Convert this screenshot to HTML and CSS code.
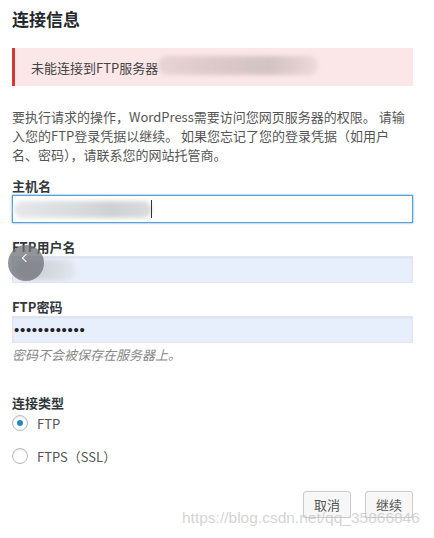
FILE: index.html
```html
<!DOCTYPE html>
<html>
<head>
    <meta charset="utf-8">
    <title>连接信息</title>
    <link rel="stylesheet" href="styles.css">
</head>
<body>
    <div class="container">
        <h2>连接信息</h2>

        <div class="notice">
            <p>未能连接到FTP服务器<span class="smudge smudge-notice"></span></p>
        </div>

        <p class="intro">要执行请求的操作，WordPress需要访问您网页服务器的权限。 请输入您的FTP登录凭据以继续。 如果您忘记了您的登录凭据（如用户名、密码），请联系您的网站托管商。</p>

        <div class="field">
            <label for="hostname">主机名</label>
            <div class="input focused">
                <span class="smudge smudge-host"></span><span class="caret"></span>
            </div>
        </div>

        <div class="field">
            <label for="username">FTP用户名</label>
            <div class="input autofill">
                <span class="smudge smudge-user"></span>
            </div>
        </div>

        <div class="field">
            <label for="password">FTP密码</label>
            <div class="input autofill"><span class="dots">••••••••••••</span></div>
            <p class="hint">密码不会被保存在服务器上。</p>
        </div>

        <div class="type">
            <h4>连接类型</h4>
            <div class="radio-row"><span class="radio checked"></span>FTP</div>
            <div class="radio-row second"><span class="radio"></span>FTPS（SSL）</div>
        </div>

        <div class="actions">
            <button class="button">取消</button>
            <button class="button">继续</button>
        </div>
    </div>

    <!-- 悬浮返回按钮和水印 -->
    <div class="back-btn"><span class="arrow"></span></div>
    <div class="watermark">https://blog.csdn.net/qq_35866846</div>
</body>
</html>
```

FILE: styles.css
```css
body {
    margin: 0;
    background-color: #fff;
    color: #444;
    font-family: "Noto Sans CJK SC", "Noto Sans", sans-serif;
    font-size: 13px;
}
.container {
    width: 401px;
    padding: 8px 0 0 12px;
}
h2 {
    margin: 0;
    font-size: 17px;
    line-height: 22px;
    font-weight: bold;
    color: #23282d;
}
.notice {
    margin-top: 18px;
    height: 38px;
    display: flex;
    align-items: center;
    background-color: #fbe7e7;
    border-left: 3px solid #d63638;
    padding-left: 16px;
}
.notice p {
    margin: 0;
    position: relative;
    color: #444;
}
.intro {
    margin: 21px 0 0;
    line-height: 19px;
    color: #555;
}
.field {
    margin-top: 13px;
}
.field + .field {
    margin-top: 15px;
}
label {
    display: block;
    font-weight: bold;
    line-height: 18px;
    color: #32373c;
}
.input {
    position: relative;
    height: 25px;
    border: 1px solid #ddd;
    box-shadow: inset 0 1px 2px rgba(0, 0, 0, 0.07);
}
.focused {
    height: 26px;
    border-color: #5b9dd9;
    box-shadow: 0 0 2px rgba(30, 140, 190, 0.8);
}
.autofill {
    background-color: #e8effc;
    border-color: #e2e6ec;
}
.dots {
    display: block;
    padding-left: 1px;
    line-height: 25px;
    font-family: "Liberation Sans", Arial, sans-serif;
    font-size: 15px;
    letter-spacing: 0.7px;
    color: #222;
}
.hint {
    margin: 3px 0 0;
    line-height: 18px;
    font-style: italic;
    color: #888;
}
.type {
    margin-top: 30px;
}
h4 {
    margin: 0;
    font-size: 13px;
    font-weight: bold;
    line-height: 18px;
    color: #32373c;
}
.radio-row {
    display: flex;
    align-items: center;
    height: 22px;
    color: #555;
}
.radio-row.second {
    margin-top: 11px;
}
.radio {
    width: 14px;
    height: 14px;
    border: 1px solid #b4b9be;
    border-radius: 50%;
    box-shadow: inset 0 1px 2px rgba(0, 0, 0, 0.1);
    margin-right: 9px;
    display: flex;
    align-items: center;
    justify-content: center;
}
.radio.checked::after {
    content: "";
    width: 6px;
    height: 6px;
    border-radius: 50%;
    background-color: #1e8cbe;
}
.actions {
    margin-top: 24px;
    display: flex;
    justify-content: flex-end;
    gap: 14px;
}
.button {
    width: 48px;
    height: 27px;
    padding: 0;
    border: 1px solid #ccc;
    border-radius: 3px;
    background-color: #f7f7f7;
    box-shadow: 0 1px 0 #ccc;
    font-family: inherit;
    font-size: 13px;
    color: #555;
}
.smudge {
    position: absolute;
    border-radius: 9px;
    filter: blur(2px);
}
.smudge-notice {
    left: 100%;
    top: -2px;
    width: 160px;
    height: 19px;
    background: linear-gradient(90deg, #e9d3d4, #dcc8c9 40%, #d3c3c4 70%, #eed9da);
}
.smudge-host {
    left: 1px;
    top: 5px;
    width: 138px;
    height: 17px;
    background: linear-gradient(90deg, #e6e9ec, #d7dadd 50%, #cdd1d3 70%, #dadddf);
}
.caret {
    position: absolute;
    left: 138px;
    top: 4px;
    width: 1px;
    height: 18px;
    background-color: #333;
}
.smudge-user {
    left: 3px;
    top: 3px;
    width: 60px;
    height: 20px;
    background: linear-gradient(90deg, #c9cbd2, #d5d8de 60%, #e3e7ef);
}
.back-btn {
    position: absolute;
    left: 8px;
    top: 245px;
    width: 36px;
    height: 36px;
    border-radius: 50%;
    background-color: rgba(110, 112, 118, 0.75);
}
.arrow {
    position: absolute;
    left: 15px;
    top: 10px;
    width: 5px;
    height: 5px;
    border-left: 1px solid #fff;
    border-bottom: 1px solid #fff;
    transform: rotate(45deg);
}
.watermark {
    position: absolute;
    left: 182px;
    top: 509px;
    font-family: "Liberation Sans", Arial, sans-serif;
    font-size: 15.5px;
    color: rgba(200, 200, 200, 0.8);
    white-space: nowrap;
}
```
